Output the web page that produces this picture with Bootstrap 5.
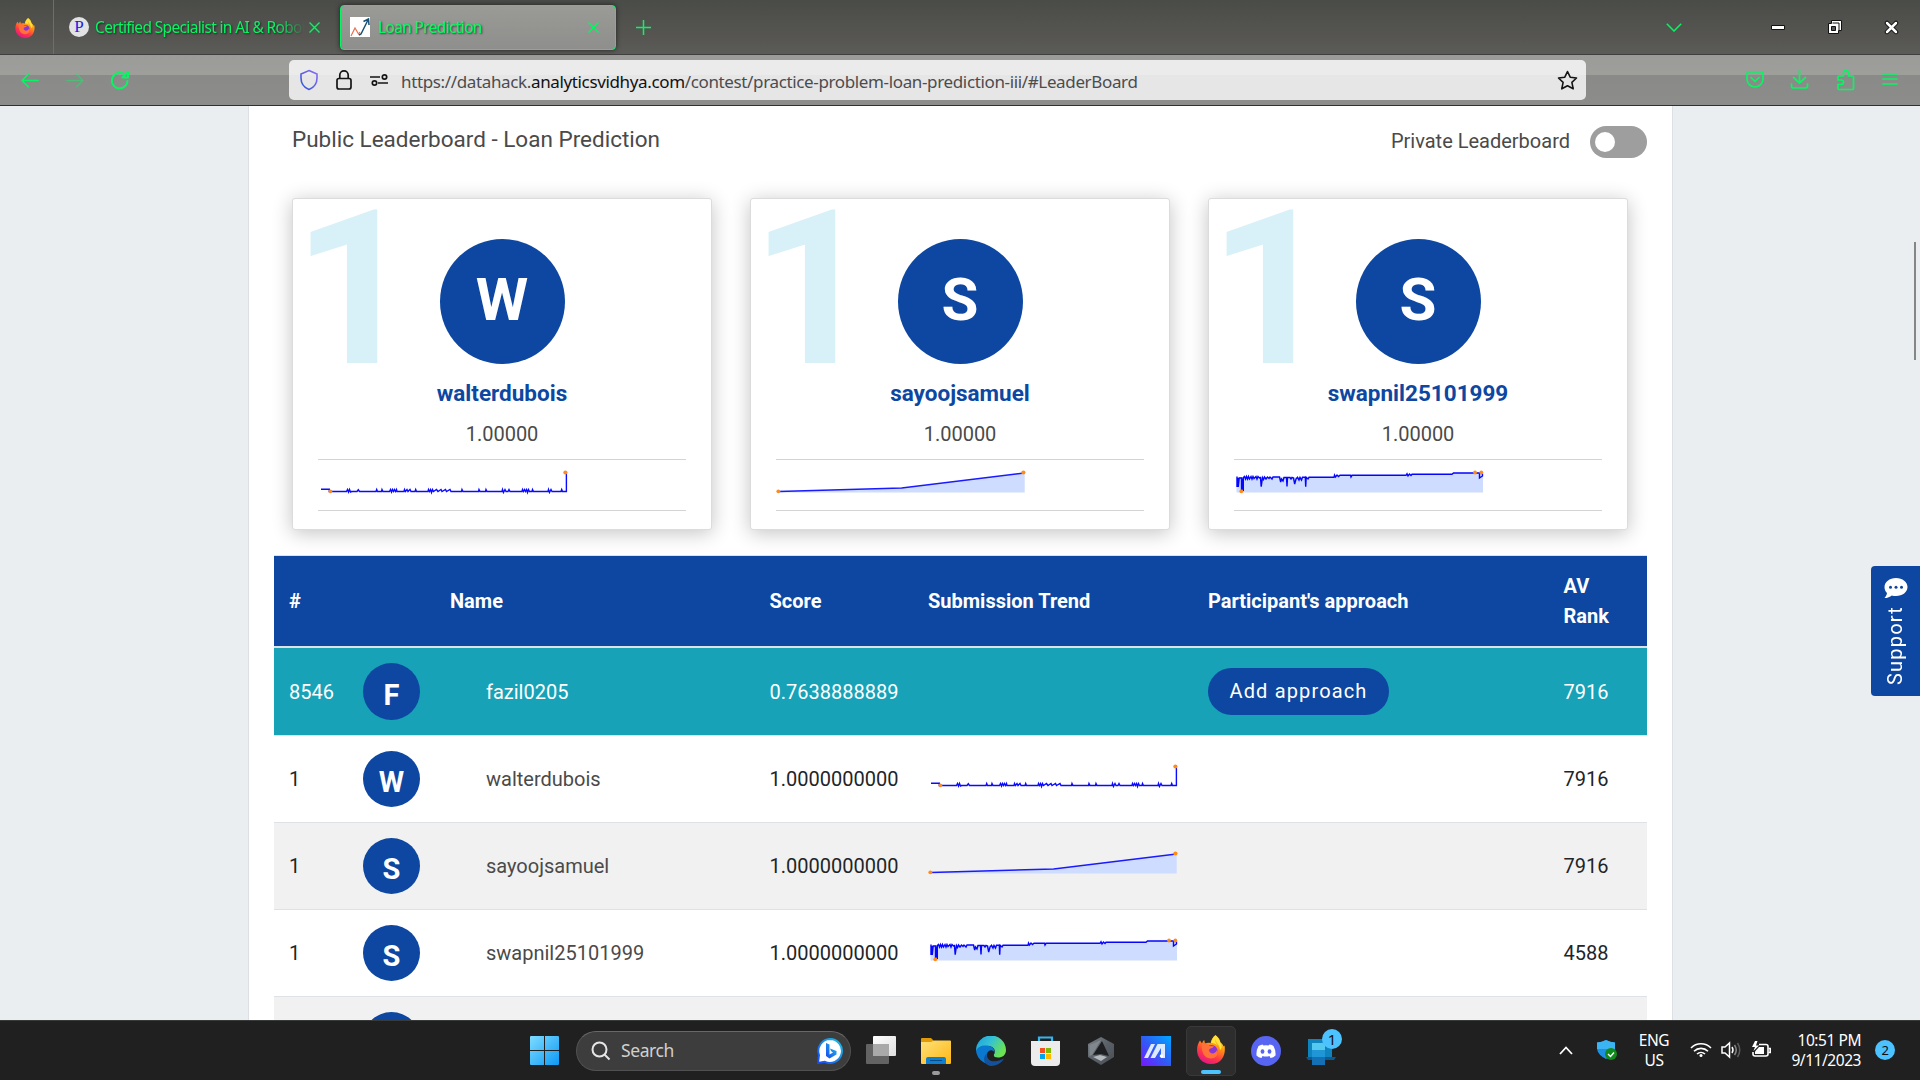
<!DOCTYPE html>
<html lang="en">
<head>
<meta charset="utf-8">
<title>Loan Prediction</title>
<link href="https://cdn.jsdelivr.net/npm/bootstrap@5.3.0/dist/css/bootstrap.min.css" rel="stylesheet">
<style>
:root{--green:#08f563;--navy:#0d47a1}
html,body{height:1080px;overflow:hidden}
body{font-family:Roboto,sans-serif;font-size:20px;color:#212529;background:#eaeef1}
svg{display:block;flex:none}
.ui{font-family:"Noto Sans","Open Sans",sans-serif}
.tabstrip{height:55px;background:linear-gradient(#4a4c48,#565552 70%,#5b5c59);border-bottom:1px solid #3f3f3d;color:var(--green);font-size:14px}
.pinned{width:54px;border-right:1px solid #2c9457;padding-left:15px;padding-top:1px}
.fav-p{width:20px;height:20px;background:#e2e2e4;color:#1d1de0;font:17px/20px "Liberation Serif",serif}
.tab-text{font-size:15.500px;letter-spacing:-.65px;text-shadow:1px 1px 2px rgba(0,0,0,.6);white-space:nowrap;overflow:hidden;padding-top:1px}
.tab-bg{width:286px;padding-left:15px}
.tab-bg .tab-text{width:211px;margin-left:5px;padding-left:1px;-webkit-mask-image:linear-gradient(90deg,#000 86%,transparent)}
.tab-on{width:276px;height:45px;padding-left:9px;border:1px solid var(--green);border-radius:4px;background:linear-gradient(#9a9a97,#8e8e8c);box-shadow:0 0 5px #222}
.plus{margin-left:20px}
.win-btns{padding-right:21px}
.win-btns .chev{margin-right:89px}
.win-btns .wmin{margin-right:43px}
.win-btns .wres{margin-right:42px}
.toolbar{height:51px;background:linear-gradient(#9b9b99 0,#9e9e9b 20px,#8a8a88 20px,#8c8c8a);border-bottom:1px solid #303033;color:var(--green)}
.urlbox{width:1297px;height:40px;border-radius:5px;background:linear-gradient(#ebebeb 15px,#e6e6e6 15px);color:#151515;margin-left:160px;padding-left:10px}
.url{font-size:17px;color:#4c4c4f;letter-spacing:-.36px;margin-left:12px;margin-top:3px;white-space:nowrap;line-height:24px}
.url b{color:#111;font-weight:400}
.gap-icon{margin-left:16px}
.tool-icons{margin-right:22px}
.viewport{height:914px;overflow:hidden;position:relative}
.sheet{width:1425px;height:914px;margin-left:248px;background:#fff;border:solid #dcdfe3;border-width:0 1px;padding:0 25px;overflow:hidden}
.top-line{height:92px;color:#4a4a4a;padding-left:18px}
.board-title{font-size:22.5px;margin-top:-25px}
.private{margin-right:20px;margin-top:-2px}
.toggle-wrap{margin-top:-20px}
.toggle{width:57px;height:32px;border-radius:16px;background:#9e9e9e;padding:0 5px}
.toggle span{width:20px;height:20px;background:#fff;border-radius:50%}
.podium{gap:38px;padding-left:18px;height:357px}
.winner{width:420px;height:332px;border:1px solid #dcdcdc;border-radius:3px;box-shadow:0 3px 20px rgba(0,0,0,.24);padding:40px 25px 0;position:relative;color:#4a4a4a;background:#fff}
.place{position:absolute;left:0;top:-23px;font-size:215px;line-height:228px;font-weight:700;color:#d8f0f8}
.face{background:var(--navy);color:#fff;font-weight:700;border-radius:50%;text-align:center}
.face-lg{width:125px;height:125px;font-size:60px;line-height:122px;position:relative}
.who{color:var(--navy);font-weight:700;font-size:22.5px;line-height:30px;margin-top:14px}
.pts{line-height:30px;margin-top:11px;margin-bottom:10px}
.trend{border:solid #d4d4d4;border-width:1px 0;width:368px;height:52px;padding-top:9px}
.board{width:1373px;table-layout:fixed;border-collapse:separate;border-spacing:0;margin:0}
.board th{height:93px;background:var(--navy);color:#fff;border-top:1px solid #dee2e6;border-bottom:2px solid #dee2e6;padding:0 15px;vertical-align:middle;line-height:30px}
.board td{height:87px;padding:0 15px;vertical-align:middle;border-bottom:1px solid #dee2e6;white-space:nowrap}
.board .nick{padding-left:51px;color:#4a4a4a}
.board tr.me td{height:88px;background:#17a2b8;color:#fff}
.board tr.alt td{background:#f1f1f1}
.c-num{width:74px}.c-face{width:87px}.c-name{width:319.5px}.c-score{width:158.5px}.c-trend{width:280px}.c-app{width:355.5px}
.face-sm{width:57px;height:56px;font-size:29px;line-height:63px}
.me .face-sm{height:57px;line-height:64px}
.btn-add{background:var(--navy);color:#fff;border-radius:24px;font-size:20px;letter-spacing:1.15px;width:181px;height:47px;padding:0;line-height:47px}
.support{position:absolute;right:0;top:460px;width:49px;height:130px;background:var(--navy);color:#fff;border-radius:4px 0 0 4px}
.support span{writing-mode:vertical-rl;transform:rotate(180deg);letter-spacing:1.2px;font-size:20px;line-height:24px;margin-top:7px;margin-right:2px}
.scroll{position:absolute;right:4px;top:136px;width:2px;height:118px;background:#868685}
.taskbar{height:60px;background:#202020;border-top:1px solid #383a3a;color:#fff;position:relative}
.searchpill{width:275px;height:40px;border-radius:20px;background:#3d3d3d;border:1px solid #515151;border-top-color:#686868;color:#d0d0d0;font-size:17.500px;letter-spacing:-.4px;padding:0 7px 0 14px;margin-left:17px}
.searchpill span{margin-left:10px}
.apps{position:absolute;left:530px;top:0;height:59px}
.taskview{margin-left:15px}
.gap-app{margin-left:25px}
.fox-tile{width:50px;height:50px;background:#2d2d2d;border:1px solid #393939;border-radius:5px;position:relative;margin-left:15px;padding-top:8px}
.run{position:absolute;bottom:1px;left:14px;width:20px;height:4px;border-radius:2px;background:#4cc2ff}
.dot-run{position:absolute;left:11px;top:34px;width:8px;height:4px;border-radius:2px;background:#9a9a9a}
.bubble{width:20px;height:20px;border-radius:50%;background:#4cc2ff;color:#111;font-size:13px;line-height:20px;text-align:center}
.bubble-app{left:16px;top:-8px;font-size:15px}
.tray{position:absolute;right:25px;top:-1px;height:59px;font-size:15.500px;letter-spacing:-.45px;line-height:20px}
.tray svg,.tray .bubble{margin-top:1px}
.lang{margin-left:21px;width:32px}
.clock{margin-left:17px;width:73px;white-space:nowrap}
</style>
<script src="https://cdn.jsdelivr.net/npm/bootstrap@5.3.0/dist/js/bootstrap.bundle.min.js"></script>
</head>
<body>
<svg width="0" height="0" class="position-absolute">
<defs>
<linearGradient id="ff1" x1=".8" y1="0" x2=".3" y2="1"><stop offset="0" stop-color="#fff44f"/><stop offset=".35" stop-color="#ff980e"/><stop offset=".7" stop-color="#ff3647"/><stop offset="1" stop-color="#e31587"/></linearGradient>
<linearGradient id="win" x1="0" y1="0" x2="1" y2="1"><stop offset="0" stop-color="#7fdcff"/><stop offset="1" stop-color="#0d99f5"/></linearGradient>
<linearGradient id="ed1" x1="0" y1="0" x2="1" y2=".5"><stop offset="0" stop-color="#1a9fe0"/><stop offset=".5" stop-color="#35c1d4"/><stop offset="1" stop-color="#6be352"/></linearGradient>
<linearGradient id="ma" x1="1" y1="0" x2="0" y2="1"><stop offset="0" stop-color="#00a8ff"/><stop offset=".5" stop-color="#2f5df5"/><stop offset="1" stop-color="#7a14ff"/></linearGradient>
<linearGradient id="fold" x1="0" y1="0" x2="1" y2="1"><stop offset="0" stop-color="#ffe07a"/><stop offset="1" stop-color="#fdb813"/></linearGradient>
<linearGradient id="bing" x1="0" y1="1" x2="1" y2="0"><stop offset="0" stop-color="#1b48ef"/><stop offset="1" stop-color="#19c3e6"/></linearGradient>
<linearGradient id="shd" x1="0" y1="1" x2="1" y2="0"><stop offset="0" stop-color="#2b55d4"/><stop offset="1" stop-color="#8b6bf5"/></linearGradient>
<linearGradient id="arm" x1="0" y1="0" x2="1" y2="1"><stop offset="0" stop-color="#7b8288"/><stop offset=".5" stop-color="#596067"/><stop offset="1" stop-color="#4a4f54"/></linearGradient>
<linearGradient id="tv" x1="0" y1="0" x2="1" y2="1"><stop offset="0" stop-color="#fff"/><stop offset="1" stop-color="#dedede"/></linearGradient>
<symbol id="fox" viewBox="0 0 28 29">
<path d="M18.500 0C22 2.500 23 5 23.500 7.500C24.500 8 26 9.500 26.500 11.500L27.500 10.500C29 18 26 29 14 29C5 29 0 22 0 15C0 11 1.500 7.500 3 5.500L5 8.500C5.500 7 6 6 7.200 5L8 8.500C10 7.500 12 7.600 13.500 8.200C14 4.500 16 2 18.500 0Z" fill="url(#ff1)"/>
<circle cx="14.500" cy="16" r="6" fill="#8a35d6"/>
<path d="M5 8.500C8 8 11 9 12.500 11L17 11.200C16 13.500 12.500 13 12 15C12.300 19 18 20 20 15C22 19 19 24 13.500 23.500C7 23 4 17 5 8.500Z" fill="#ff7139"/>
<path d="M18.500 1C16.500 6 23 9 23 15C25 13.500 25.500 11 23.500 8C22.500 5 21 3 18.500 1ZM14 8C15 4 16.500 2.500 18.500 1C17 6 19 8 20.500 10.500C18.500 8.500 16 8 14 8Z" fill="#ffe23a"/>
</symbol>
<symbol id="sp1" viewBox="0 0 250 32">
<path d="M3 20.300H11.300V22.500H28.500L29.500 20.500L30.500 23L31.500 20.500L32.500 23L33.500 22.500H39L40.300 20.800L41.500 22.500H58L58.700 20.500L59.500 22.500H63.500L64 20.500L65 22.500H71.500L72.500 20.500L73.500 23L74.500 20.500L75.500 22.500L76.500 20.500L77.500 22.500L78.500 20.500L79 22.500H86L86.500 20.500L87.500 22.500L89 20.500L90 22.500L92 20.500L93 22.500H97L97.700 20.500L98.500 22.500H110L110.500 20.500L111.500 22.500L112.500 20.500L113.500 23.500L114.500 20.500L115.500 22.500L118.500 20.500L120 22.500L123 20.500L124 22.500L127.500 20.500L128.500 22.500L132 20.500L133 22.500H143.500L144 20.500L145 22.500H160.500L161 20.500L162 22.500H167.500L168 20.500L169 22.500H184L184.500 20.500L185.500 23.500L187 20.500L188 22.500H190L191 20.500L192 22.500H204L204.500 20.500L205.500 22.500L206.500 20.500L207.500 22.500L208.500 20.500L209.500 23.500L210.500 20.500L211.500 22.500H214L214.500 20.500L215.500 22.500H230L230.500 20.500L231.500 23.500L233 20.500L234 22.500H243L243.700 20.500L244.500 22.500H248.400V4" fill="none" stroke="#0a0aff" stroke-width="1.400"/>
<circle cx="12.300" cy="22.300" r="1.900" fill="#ff8c1a"/><circle cx="247.400" cy="3.500" r="2.100" fill="#ff8c1a"/>
</symbol>
<symbol id="sp2" viewBox="0 0 250 32">
<path d="M2.500 22.500L125.700 19L248.700 4V23.500H2.500Z" fill="#cddcff"/><path d="M2.500 22.500L125.700 19L248.500 4" fill="none" stroke="#1a1aff" stroke-width="1.400"/>
<circle cx="2.300" cy="22.300" r="1.900" fill="#ff8c1a"/><circle cx="247.400" cy="3.500" r="2.100" fill="#ff8c1a"/>
</symbol>
<symbol id="sp3" viewBox="0 0 250 32">
<path d="M2.500 8.300H100V6.500H172V5.300H219V4H249V23.500H2.500Z" fill="#cddcff"/>
<path d="M3 7.500V18L4.300 9V18L5.200 9H7.500V22L8.500 9.500L9.300 22V8.500L10.500 7.500L11.500 10L12.500 7.500L13.500 10L14.500 7.500L15.500 10L17 7.500L18 10L19 7.500L20 9.500L22 7.500L23 10L24 7.500L25.500 9L26.500 8.500L27.200 17.700L28.500 8.500L29.500 10.500L30.500 8L32 10L33.500 8L35 9.500L36 8L38 10L39 8H45.500L46.700 13L47.500 10L49 12L50 8.500H52.500L53 17.500L53.500 8.500H56L57 10L58 8.300L59.500 9L60.700 15L62 10L63.500 8.300L65 11L66 8.300L67.500 11L68.500 8.300H71.300L71.700 17.700L72.200 8.300L74 10L75 8.300H100L100.500 6L101.500 8L103 6L104.500 7.500L106 6.300H116.500L117 8L118 6.300H172L173 4.800L174 7L175.500 5L177 6.500L178 5.300H218L219.500 4H245.500V9L248.500 7V4.500" fill="none" stroke="#0505ff" stroke-width="1.400"/>
<circle cx="7.300" cy="22.300" r="1.900" fill="#ff8c1a"/><circle cx="241" cy="3.500" r="1.900" fill="#ff8c1a"/><circle cx="247.300" cy="3.500" r="1.900" fill="#ff8c1a"/>
</symbol>
</defs>
</svg>

<header class="ui">
<div class="tabstrip d-flex align-items-center">
<div class="pinned h-100 d-flex align-items-center"><svg width="20" height="20"><use href="#fox"/></svg></div>
<div class="tab-bg d-flex align-items-center">
<span class="fav-p rounded-circle text-center">P</span><span class="tab-text">Certified Specialist in AI &amp; Robotics</span>
<svg class="ms-1" width="11" height="11" stroke="#08f563" stroke-width="1.400"><path d="M.5.5l10 10M10.500.5l-10 10"/></svg>
</div>
<div class="tab-on d-flex align-items-center">
<svg width="20" height="20"><path fill="#fff" d="M0 0h20v20H0z"/><path d="M1 19L5 11L8.500 17L10 15" fill="none" stroke="#e8704c" stroke-width="1.200"/><path d="M9 18L11 17L18 3M13.500 4.500L18.500 2L19 8" fill="none" stroke="#175078" stroke-width="1.500"/></svg>
<span class="tab-text ms-2 flex-grow-1">Loan Prediction</span>
<svg class="me-3" width="11" height="11" stroke="#08f563" stroke-width="1.200"><path d="M.5.5l10 10M10.500.5l-10 10"/></svg>
</div>
<svg class="plus" width="15" height="15" stroke="#08f563" stroke-width="1.500"><path d="M7.500 0v15M0 7.500h15"/></svg>
<div class="win-btns ms-auto d-flex align-items-center">
<svg class="chev" width="16" height="9" fill="none" stroke="#08f563" stroke-width="1.500"><path d="M.8.8L8 8L15.200.8"/></svg>
<svg class="wmin" width="14" height="5"><path d="M.5.5h13v4H.5z" fill="#fff" stroke="#111"/></svg>
<svg class="wres" width="14" height="14"><path d="M3.500.5h10v10h-3v3h-10v-10h3z" fill="#fff" stroke="#111"/><path d="M4.500 3h6.500v7" fill="none" stroke="#111"/><path d="M3.500 6.500h4v4h-4z" fill="#555" stroke="#111"/></svg>
<svg width="15" height="15" stroke-linecap="round"><path d="M3 3l9 9M12 3l-9 9" stroke="#111" stroke-width="4.500"/><path d="M3 3l9 9M12 3l-9 9" stroke="#fff" stroke-width="2.500"/></svg>
</div>
</div>
<div class="toolbar d-flex align-items-center">
<svg width="129" height="20" fill="none" stroke="#08f563" stroke-width="1.600" stroke-linecap="round" stroke-linejoin="round"><path d="M38 10.500H22M28.500 4L22 10.500L28.500 17"/><path opacity=".45" d="M67 10.500H83M76.500 4L83 10.500L76.500 17"/><path stroke-width="2" d="M127.500 11A7.800 7.800 0 1 1 124.500 4.500M128 2V7.500H122.500Z"/></svg>
<div class="urlbox d-flex align-items-center">
<svg width="20" height="22" fill="none" stroke="url(#shd)" stroke-width="1.600"><path d="M10 1.500L18 5V9C18 14.500 15 18.500 10 20.500C5 18.500 2 14.500 2 9V5Z"/></svg>
<svg class="gap-icon" width="18" height="22" fill="none" stroke="#151515" stroke-width="1.700"><rect x="2" y="9.500" width="14" height="10.500" rx="2"/><path d="M4.800 9.500V6A4.200 4.200 0 0 1 13.200 6V9.500"/></svg>
<svg class="gap-icon" width="20" height="14" fill="none" stroke="#151515" stroke-width="1.700"><path d="M1 4H11M9 10H19"/><circle cx="15.500" cy="4" r="2.200"/><circle cx="5.500" cy="10" r="2.200"/></svg>
<span class="url">https://datahack.<b>analyticsvidhya.com</b>/contest/practice-problem-loan-prediction-iii/#LeaderBoard</span>
<svg class="ms-auto me-2" width="21" height="21" viewBox="0 0 21 21" fill="none" stroke="#151515" stroke-width="1.600" stroke-linejoin="round"><path d="M10.500 1.500L13.200 7.200L19.500 8L14.900 12.300L16.200 18.800L10.500 15.700L4.800 18.800L6.100 12.300L1.500 8L7.800 7.200Z"/></svg>
</div>
<svg class="tool-icons ms-auto" width="152" height="22" fill="none" stroke="#08f563" stroke-width="1.700" stroke-linecap="round" stroke-linejoin="round"><path d="M1 4.500Q1 3 2.500 3H15.500Q17 3 17 4.500V10A8 8 0 0 1 1 10ZM5 8.500L9 12.500L13 8.500"/><path d="M53.500 1V14M47.500 8.500L53.500 14L59.500 8.500M45.500 15V17Q45.500 19 47.500 19H59.500Q61.500 19 61.500 17V15"/><path d="M92 19.500Q92 20.500 93 20.500H106.500Q107.500 20.500 107.500 19.500V8Q107.500 7 106.500 7H102.500V3.500Q102.500 1.500 100 1.500Q97.500 1.500 97.500 3.500V7H93Q92 7 92 8V11H95Q97.500 11 97.500 13Q97.500 15.500 95 15.500H92Z"/><path d="M137 5H151M137 10H151M137 15H151"/></svg>
</div>
</header>

<main class="viewport">
<div class="sheet">
<div class="top-line d-flex align-items-center">
<span class="board-title">Public Leaderboard - Loan Prediction</span>
<div class="toggle-wrap ms-auto d-flex align-items-center"><span class="private">Private Leaderboard</span><div class="toggle d-flex align-items-center"><span></span></div></div>
</div>
<div class="podium d-flex">
<div class="winner d-flex flex-column align-items-center"><span class="place">1</span><div class="face face-lg">W</div><div class="who">walterdubois</div><div class="pts">1.00000</div><div class="trend"><svg width="250" height="32"><use href="#sp1"/></svg></div></div>
<div class="winner d-flex flex-column align-items-center"><span class="place">1</span><div class="face face-lg">S</div><div class="who">sayoojsamuel</div><div class="pts">1.00000</div><div class="trend"><svg width="250" height="32"><use href="#sp2"/></svg></div></div>
<div class="winner d-flex flex-column align-items-center"><span class="place">1</span><div class="face face-lg">S</div><div class="who">swapnil25101999</div><div class="pts">1.00000</div><div class="trend"><svg width="250" height="32"><use href="#sp3"/></svg></div></div>
</div>
<table class="board">
<colgroup><col class="c-num"><col class="c-face"><col class="c-name"><col class="c-score"><col class="c-trend"><col class="c-app"><col></colgroup>
<thead><tr><th>#</th><th></th><th>Name</th><th>Score</th><th>Submission Trend</th><th>Participant's approach</th><th>AV Rank</th></tr></thead>
<tbody>
<tr class="me"><td>8546</td><td><div class="face face-sm">F</div></td><td class="nick text-white">fazil0205</td><td>0.7638888889</td><td></td><td><button class="btn btn-add border-0">Add approach</button></td><td>7916</td></tr>
<tr><td>1</td><td><div class="face face-sm">W</div></td><td class="nick">walterdubois</td><td>1.0000000000</td><td><svg width="250" height="32"><use href="#sp1"/></svg></td><td></td><td>7916</td></tr>
<tr class="alt"><td>1</td><td><div class="face face-sm">S</div></td><td class="nick">sayoojsamuel</td><td>1.0000000000</td><td><svg width="250" height="32"><use href="#sp2"/></svg></td><td></td><td>7916</td></tr>
<tr><td>1</td><td><div class="face face-sm">S</div></td><td class="nick">swapnil25101999</td><td>1.0000000000</td><td><svg width="250" height="32"><use href="#sp3"/></svg></td><td></td><td>4588</td></tr>
<tr class="alt"><td></td><td><div class="face face-sm"></div></td><td></td><td></td><td></td><td></td><td></td></tr>
</tbody>
</table>
</div>
<div class="support d-flex flex-column align-items-center pt-2"><svg class="mt-1" width="24" height="21" viewBox="0 0 24 21"><path d="M12 0C18.500 0 23.500 4 23.500 9C23.500 14 18.500 18 12 18C10.500 18 9 17.800 7.800 17.400C6 18.800 3.500 20 .5 20C2 18.500 2.800 16.500 3 15C1.300 13.300.5 11.200.5 9C.5 4 5.500 0 12 0Z" fill="#fff"/><circle cx="6.500" cy="9.300" r="1.500" fill="#0d47a1"/><circle cx="12" cy="9.300" r="1.500" fill="#0d47a1"/><circle cx="17.500" cy="9.300" r="1.500" fill="#0d47a1"/></svg><span>Support</span></div>
<div class="scroll"></div>
</main>

<footer class="taskbar ui">
<div class="apps d-flex align-items-center">
<svg width="29" height="29" fill="url(#win)"><path d="M1 0H14V14H0V1Q0 0 1 0ZM15 0H28Q29 0 29 1V14H15ZM0 15H14V29H1Q0 29 0 28ZM15 15H29V28Q29 29 28 29H15Z"/></svg>
<div class="searchpill d-flex align-items-center">
<svg width="20" height="20" fill="none" stroke="#e6e6e6" stroke-width="2"><circle cx="8.500" cy="8.500" r="7"/><path d="M13.500 13.500L18.500 18.500"/></svg><span>Search</span>
<svg class="ms-auto" width="26" height="26"><path d="M13 1A12 12 0 1 1 7.500 23.700L1 25L2 17A12 12 0 0 1 13 1Z" fill="#fff" stroke="url(#bing)" stroke-width="2"/><path d="M9 5L12.500 6.500V16.500L16 14.500L14 13L13 10.500L19.500 13V16.500L12.500 20.500L9 18Z" fill="url(#bing)"/></svg>
</div>
<svg class="taskview" width="30" height="29"><rect y="8" width="23" height="20" rx="1" fill="#636363"/><rect x="7" width="23" height="20" rx="1" fill="url(#tv)"/><path d="M7 8H23V20H7Z" fill="#a9a9a9"/></svg>
<div class="gap-app position-relative"><svg width="30" height="27"><path d="M0 2Q0 1 1 1H10L13 4V9H0Z" fill="#e09a0a"/><path d="M0 5H10L13 3.500H29Q30 3.500 30 4.500V26Q30 27 29 27H1Q0 27 0 26Z" fill="url(#fold)"/><path d="M5 27V22Q5 20 7 20H23Q25 20 25 22V27Z" fill="#0f7fd0"/><path d="M9 23.500H21" stroke="#084a88"/></svg><i class="dot-run"></i></div>
<svg class="gap-app" width="30" height="30"><path d="M0 15A15 15 0 0 1 30 14C30 19 26.500 21.500 22 21.500C18 21.500 17 19.500 18.500 17.500C20 14 17 10 12 10C5 10 1 14 0 15Z" fill="url(#ed1)"/><path d="M0 15C1 11 6 9 11 9.500C16 10 19 13 18.500 17C18 13.500 12 13 11 18C10 23 15 28 21 27A15 15 0 0 1 0 15Z" fill="#0b78d0"/><path d="M11 17C9 23 15 26.500 21 25C24 24.500 26 23.500 28 22.500C26 27 20 30 15 30C9 29 5 23 11 17Z" fill="#12529c"/></svg>
<svg class="gap-app" width="29" height="30"><path d="M8 7V1.500H21V7" fill="none" stroke="#35b5ee" stroke-width="2.200"/><path d="M0 5H29V26Q29 30 25 30H4Q0 30 0 26Z" fill="#ececec"/><path fill="#f25022" d="M9 12h5v5H9z"/><path fill="#7fba00" d="M15 12h5v5h-5z"/><path fill="#00a4ef" d="M9 18h5v5H9z"/><path fill="#ffb900" d="M15 18h5v5h-5z"/></svg>
<svg style="margin-left:28px" width="26" height="28"><path d="M13 0L26 7V20L13 28L0 20V7Z" fill="url(#arm)"/><path d="M14 4L21 19L13 17L5 18Z" fill="#1d1f22"/><path d="M13 3L4 18L1.500 19V8Z" fill="#80878d"/><path d="M5 20L12 18L19 20L13 24Z" fill="#b4b9bd"/></svg>
<svg style="margin-left:27px" width="30" height="30"><path fill="url(#ma)" d="M0 0h30v30H0z"/><path d="M3 22L10 8H14L7 22ZM9.500 22L16.500 8H24V22H20V12L14 22Z" fill="#dce9ff"/><circle cx="20.500" cy="20" r="1.800" fill="#fff"/></svg>
<div class="fox-tile d-flex justify-content-center"><svg width="28" height="29"><use href="#fox"/></svg><i class="run"></i></div>
<svg style="margin-left:15px" width="30" height="30"><circle cx="15" cy="15" r="15" fill="#5865f2"/><path d="M11.500 8.500L12.500 9.500Q15 9 17.500 9.500L18.500 8.500Q21 9 22.500 10Q25 14.500 24.500 19.500Q22.500 21.500 19.500 22L18.500 20Q15 21 11.500 20L10.500 22Q7.500 21.500 5.500 19.500Q5 14.500 7.500 10Q9 9 11.500 8.500Z" fill="#fff"/><ellipse cx="11.500" cy="15.500" rx="1.900" ry="2.200" fill="#5865f2"/><ellipse cx="18.500" cy="15.500" rx="1.900" ry="2.200" fill="#5865f2"/></svg>
<div class="gap-app position-relative"><svg width="30" height="28"><path d="M2 2H26V20H2Z" fill="#0f83bd"/><path d="M0 20H30L28 23H2Z" fill="#0b5a94"/><path d="M6 6H19V13H6Z" fill="#54c8ef"/><path d="M6 13H19V20H6Z" fill="#2196d6"/><path d="M6 20H19V28H6Z" fill="#1470b5"/></svg><span class="bubble bubble-app position-absolute">1</span></div>
</div>
<div class="tray d-flex align-items-center">
<svg width="14" height="9" fill="none" stroke="#fff" stroke-width="1.800"><path d="M1 8L7 1.500L13 8"/></svg>
<svg style="margin-left:24px" width="20" height="20"><path d="M9 0Q13 2 18 2.500V9Q17 15 9 19Q1 15 0 9V2.500Q5 2 9 0Z" fill="#1f8fe0"/><path d="M9 0Q13 2 18 2.500V9H0V2.500Q5 2 9 0Z" fill="#3cb4f4"/><circle cx="14" cy="14" r="6" fill="#11891c"/><path d="M11 14L13.500 16.500L17 12.500" fill="none" stroke="#fff" stroke-width="1.400"/></svg>
<div class="lang text-center">ENG<br>US</div>
<svg style="margin-left:20px" width="22" height="16" fill="none" stroke="#fff" stroke-width="1.600"><path d="M1 6A14 14 0 0 1 21 6M4 9.200A10 10 0 0 1 18 9.200M7 12A6 6 0 0 1 15 12"/><circle cx="11" cy="13.500" r="1.500" fill="#fff" stroke="none"/></svg>
<svg style="margin-left:9px" width="20" height="18" fill="none" stroke="#fff" stroke-width="1.500"><path d="M1 6H4L8.500 2V16L4 12H1Z"/><path d="M11 6Q13 9 11 12"/><path d="M13.500 4Q17 9 13.500 14" stroke="#888"/><path d="M16.500 2Q21 9 16.500 16" stroke="#5a5a5a"/></svg>
<svg style="margin-left:10px" width="20" height="18" fill="none" stroke="#fff" stroke-width="1.600"><path d="M8 3.500H15Q17 3.500 17 5.500V13Q17 15 15 15H4Q2 15 2 13V11"/><path d="M8 6H13V13H4V10.500Z" fill="#fff" stroke="none"/><path d="M17.500 7.500H19.200V11.500H17.500"/><path d="M4 0L1 6H4L2.500 10L8 4.500H5L6.500 0Z" fill="#fff" stroke="none"/></svg>
<div class="clock text-end">10:51 PM<br>9/11/2023</div>
<span class="bubble" style="margin-left:14px">2</span>
</div>
</footer>
</body>
</html>
